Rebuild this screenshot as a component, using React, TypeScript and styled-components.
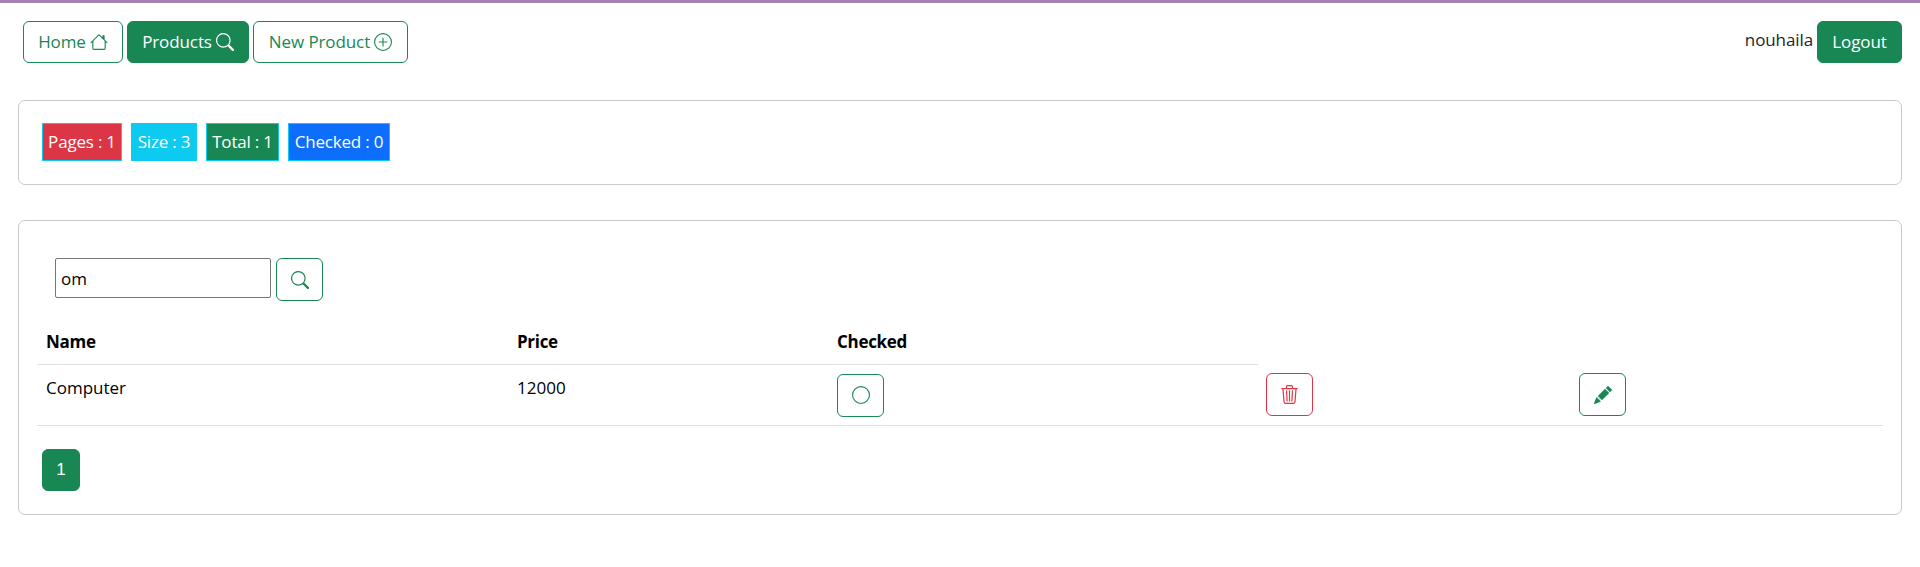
import React from 'react';
import styled, { createGlobalStyle } from 'styled-components';
import { BsCircle, BsHouse, BsPencilFill, BsPlusCircle, BsSearch, BsTrash3 } from 'react-icons/bs';

const GREEN = '#198754';
const RED = '#dc3545';

const GlobalStyle = createGlobalStyle`
  html, body {
    margin: 0;
    padding: 0;
    background: #fff;
    color: #212529;
    font-family: "Open Sans", "Noto Sans", "Liberation Sans", sans-serif;
    font-size: 17px;
    line-height: 24px;
  }
`;

const TopLine = styled.div`
  height: 3px;
  background: #a67fb3;
`;

const Nav = styled.nav`
  display: flex;
  align-items: center;
  justify-content: space-between;
  height: 42px;
  margin: 18px 18px 0 23px;
`;

const NavGroup = styled.div`
  display: flex;
  align-items: center;
  gap: 4px;
`;

const Button = styled.button<{ $solid?: boolean; $color?: string; $w?: number; $h?: number }>`
  display: inline-flex;
  align-items: center;
  justify-content: center;
  gap: 4px;
  box-sizing: border-box;
  width: ${(p) => (p.$w ? `${p.$w}px` : 'auto')};
  height: ${(p) => p.$h ?? 42}px;
  padding: 0;
  border: 1px solid ${(p) => p.$color ?? GREEN};
  border-radius: 6px;
  background: ${(p) => (p.$solid ? p.$color ?? GREEN : '#fff')};
  color: ${(p) => (p.$solid ? '#fff' : p.$color ?? GREEN)};
  font-family: inherit;
  font-size: 17px;
  line-height: 24px;
  letter-spacing: -0.1px;
`;

const UserName = styled.span`
  margin-top: -4px;
  letter-spacing: -0.1px;
`;

const Card = styled.section`
  box-sizing: border-box;
  margin-left: 18px;
  width: 1884px;
  border: 1px solid #cacaca;
  border-radius: 7px;
`;

const StatsCard = styled(Card)`
  display: flex;
  align-items: flex-start;
  gap: 9px;
  height: 85px;
  margin-top: 37px;
  padding: 22px 23px;
`;

const Stat = styled.span<{ $bg: string; $w: number }>`
  display: flex;
  align-items: center;
  justify-content: center;
  box-sizing: border-box;
  width: ${(p) => p.$w}px;
  height: 38px;
  border: 1px solid #0dcaf0;
  background: ${(p) => p.$bg};
  color: #fff;
  letter-spacing: -0.2px;
  white-space: nowrap;
`;

const ProductsCard = styled(Card)`
  height: 295px;
  margin-top: 35px;
  padding: 37px 18px 0;
`;

const SearchRow = styled.form`
  display: flex;
  align-items: flex-start;
  gap: 5px;
  margin-left: 18px;
`;

const SearchInput = styled.input`
  box-sizing: border-box;
  width: 216px;
  height: 40px;
  padding: 0 5px;
  border: 1px solid #767676;
  border-radius: 2px;
  color: #000;
  font-family: inherit;
  font-size: 17px;
`;

const Table = styled.table`
  width: 1846px;
  margin-top: 13px;
  border-collapse: collapse;
  table-layout: fixed;
  color: #000;
`;

const Col = styled.col<{ $w: number }>`
  width: ${(p) => p.$w}px;
`;

const Th = styled.th`
  height: 50px;
  padding: 6px 8px 0;
  box-sizing: border-box;
  border-bottom: 1px solid #dee2e6;
  font-weight: 700;
  font-size: 17px;
  letter-spacing: -0.3px;
  text-align: left;

  &:first-child {
    padding-left: 9px;
  }
`;

const Td = styled.td<{ $text?: boolean }>`
  height: 61px;
  padding: ${(p) => (p.$text ? 11 : 9)}px 8px 0;
  box-sizing: border-box;
  border-bottom: 1px solid #dee2e6;
  vertical-align: top;

  &:first-child {
    padding-left: 9px;
  }
`;

const Pager = styled.div`
  display: flex;
  margin: 23px 0 0 5px;
`;

const PageButton = styled(Button)`
  font-family: "Liberation Sans", sans-serif;
`;

export default function App() {
  return (
    <>
      <GlobalStyle />
      <TopLine />
      <Nav>
        <NavGroup>
          <Button $w={100}>Home <BsHouse size={18} /></Button>
          <Button $w={122} $solid>Products <BsSearch size={18} /></Button>
          <Button $w={155}>New Product <BsPlusCircle size={18} /></Button>
        </NavGroup>
        <NavGroup>
          <UserName>nouhaila</UserName>
          <Button $w={85} $solid>Logout</Button>
        </NavGroup>
      </Nav>
      <StatsCard>
        <Stat $bg={RED} $w={80}>Pages : 1</Stat>
        <Stat $bg="#0dcaf0" $w={66}>Size : 3</Stat>
        <Stat $bg={GREEN} $w={73}>Total : 1</Stat>
        <Stat $bg="#0d6efd" $w={102}>Checked : 0</Stat>
      </StatsCard>
      <ProductsCard>
        <SearchRow>
          <SearchInput defaultValue="om" />
          <Button type="button" $w={47} $h={43} aria-label="Search"><BsSearch size={18} /></Button>
        </SearchRow>
        <Table>
          <colgroup>
            <Col $w={472} />
            <Col $w={320} />
            <Col $w={429} />
            <Col $w={313} />
            <Col $w={312} />
          </colgroup>
          <thead>
            <tr>
              <Th>Name</Th>
              <Th>Price</Th>
              <Th>Checked</Th>
            </tr>
          </thead>
          <tbody>
            <tr>
              <Td $text>Computer</Td>
              <Td $text>12000</Td>
              <Td><Button $w={47} $h={43} aria-label="Toggle checked"><BsCircle size={18} /></Button></Td>
              <Td><Button $w={47} $h={43} $color={RED} aria-label="Delete"><BsTrash3 size={19} /></Button></Td>
              <Td><Button $w={47} $h={43} aria-label="Edit"><BsPencilFill size={18} /></Button></Td>
            </tr>
          </tbody>
        </Table>
        <Pager>
          <PageButton $w={38} $solid>1</PageButton>
        </Pager>
      </ProductsCard>
    </>
  );
}
